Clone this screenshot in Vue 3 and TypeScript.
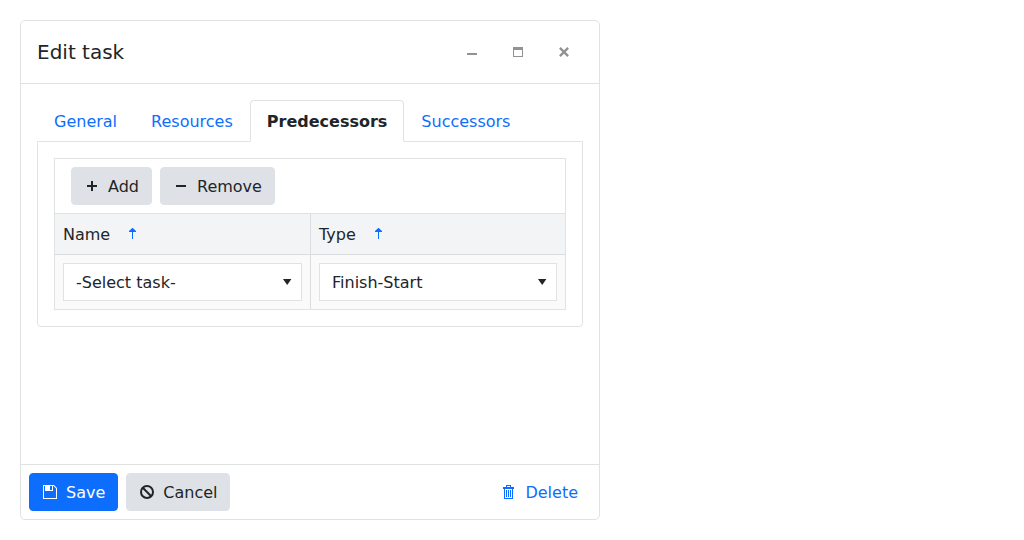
<script setup lang="ts">
import { ref } from 'vue'

const tabs: string[] = ['General', 'Resources', 'Predecessors', 'Successors']
const activeTab = ref('Predecessors')

const columns: { title: string; value: string }[] = [
  { title: 'Name', value: '-Select task-' },
  { title: 'Type', value: 'Finish-Start' },
]
</script>

<template>
  <section class="dialog" role="dialog" aria-label="Edit task">
    <header class="titlebar">
      <span class="title">Edit task</span>
      <div class="actions">
        <svg class="icon" viewBox="0 0 16 16"><path d="M3 9h10v2H3z" /></svg>
        <svg class="icon" viewBox="0 0 16 16"><path fill-rule="evenodd" d="M3 3h10v10H3zM4 6v6h8V6z" /></svg>
        <svg class="icon" viewBox="0 0 16 16"><path d="M3.9 3.9l8.2 8.2M12.1 3.9l-8.2 8.2" fill="none" stroke="currentColor" stroke-width="2.3" /></svg>
      </div>
    </header>

    <main class="content">
      <nav class="tabs">
        <button
          v-for="tab in tabs"
          :key="tab"
          class="tab"
          :class="{ active: tab === activeTab }"
          @click="activeTab = tab"
        >{{ tab }}</button>
      </nav>
      <div class="panel">
        <div class="grid">
          <div class="toolbar">
            <button class="btn">
              <svg class="icon" viewBox="0 0 16 16"><path d="M7 3h2v4h4v2H9v4H7V9H3V7h4z" /></svg>
              <span class="label">Add</span>
            </button>
            <button class="btn">
              <svg class="icon" viewBox="0 0 16 16"><path d="M3 7h10v2H3z" /></svg>
              <span class="label">Remove</span>
            </button>
          </div>
          <div class="row head">
            <div v-for="col in columns" :key="col.title" class="cell">
              <span class="label">{{ col.title }}</span>
              <svg class="icon sort" viewBox="0 0 16 16"><path d="M7 13V6H4V5l3.2-3h.6L11 5v1H8v7z" /></svg>
            </div>
          </div>
          <div class="row body">
            <div v-for="col in columns" :key="col.title" class="cell">
              <div class="select">
                <span class="label">{{ col.value }}</span>
                <svg class="icon" viewBox="0 0 16 16"><path d="M4 5h8.4l-4.2 6z" /></svg>
              </div>
            </div>
          </div>
        </div>
      </div>
    </main>

    <footer class="footer">
      <button class="btn primary">
        <svg class="icon" viewBox="0 0 16 16"><path fill-rule="evenodd" d="M1 1h11l3 3v11H1zM2 2v12h12V4.4L11.6 2H11v5H3V2zM8 2v4h2V2z" /></svg>
        <span class="label">Save</span>
      </button>
      <button class="btn">
        <svg class="icon" viewBox="0 0 16 16"><g fill="none" stroke="currentColor" stroke-width="2"><circle cx="8" cy="8" r="6" /><path d="M3.8 3.8l8.4 8.4" /></g></svg>
        <span class="label">Cancel</span>
      </button>
      <button class="btn flat">
        <svg class="icon" viewBox="0 0 16 16" shape-rendering="crispEdges"><path d="M2 3h11v2H2zM5 1h5v1H5zM5 2h1v1H5zM9 2h1v1H9zM3 5h1v10H3zM11 5h1v10h-1zM4 14h7v1H4zM5 6h1v7H5zM7 6h1v7H7zM9 6h1v7H9z" /></svg>
        <span class="label">Delete</span>
      </button>
    </footer>
  </section>
</template>

<style>
body {
  margin: 0;
  background: #fff;
}
</style>

<style scoped>
.dialog {
  box-sizing: border-box;
  width: 580px;
  height: 500px;
  margin: 20px;
  display: flex;
  flex-direction: column;
  border: 1px solid #e1e2e2;
  border-radius: 5px;
  background: #fff;
  color: #212529;
  font: 16px/24px "DejaVu Sans", sans-serif;
}

.dialog * {
  box-sizing: border-box;
}

button {
  margin: 0;
  font: inherit;
  color: inherit;
  cursor: pointer;
}

.icon {
  display: block;
  flex: none;
  width: 16px;
  height: 16px;
  fill: currentColor;
}

.label {
  padding-top: 2px;
}

.titlebar {
  display: flex;
  align-items: center;
  justify-content: space-between;
  height: 63px;
  padding: 0 27px 0 16px;
  border-bottom: 1px solid #e1e2e2;
}

.title {
  font-size: 20px;
  line-height: 30px;
}

.actions {
  display: flex;
  gap: 30px;
  color: #909294;
}

.content {
  flex: 1;
  padding: 16px;
}

.tabs {
  display: flex;
  position: relative;
  z-index: 1;
  margin-bottom: -1px;
}

.tab {
  height: 42px;
  padding: 2px 16px 0;
  border: 1px solid transparent;
  border-radius: 4px 4px 0 0;
  background: none;
  color: #0d6efd;
}

.tab.active {
  border-color: #e1e2e2;
  border-bottom-color: #fff;
  background: #fff;
  color: #212529;
  font-weight: 700;
}

.panel {
  height: 186px;
  padding: 16px;
  border: 1px solid #e1e2e2;
  border-radius: 0 0 4px 4px;
}

.grid {
  border: 1px solid #e1e2e2;
}

.toolbar {
  display: flex;
  gap: 8px;
  padding: 8px 16px;
}

.btn {
  display: flex;
  align-items: center;
  gap: 8px;
  height: 38px;
  padding: 0 12px;
  border: 1px solid #dee2e6;
  border-radius: 4px;
  background: #dee2e6;
}

.btn.primary {
  border-color: #0d6efd;
  background: #0d6efd;
  color: #fff;
}

.btn.flat {
  margin-left: auto;
  border-color: transparent;
  background: none;
  color: #0d6efd;
}

.row {
  display: grid;
  grid-template-columns: 256px 1fr;
}

.cell {
  display: flex;
  align-items: center;
  padding: 0 8px;
}

.cell:first-child {
  border-right: 1px solid #dadcdd;
}

.head {
  height: 42px;
  border-top: 1px solid #e1e2e2;
  border-bottom: 1px solid #dadcdd;
  background: #f3f4f6;
}

.sort {
  margin-left: 15px;
  color: #0d6efd;
}

.body {
  height: 54px;
  background: #fafafa;
}

.select {
  display: flex;
  align-items: center;
  justify-content: space-between;
  width: 100%;
  height: 38px;
  padding: 0 6px 0 12px;
  border: 1px solid #e1e2e2;
  background: #fff;
}

.footer {
  display: flex;
  gap: 8px;
  height: 55px;
  padding: 8px;
  border-top: 1px solid #e1e2e2;
}
</style>
